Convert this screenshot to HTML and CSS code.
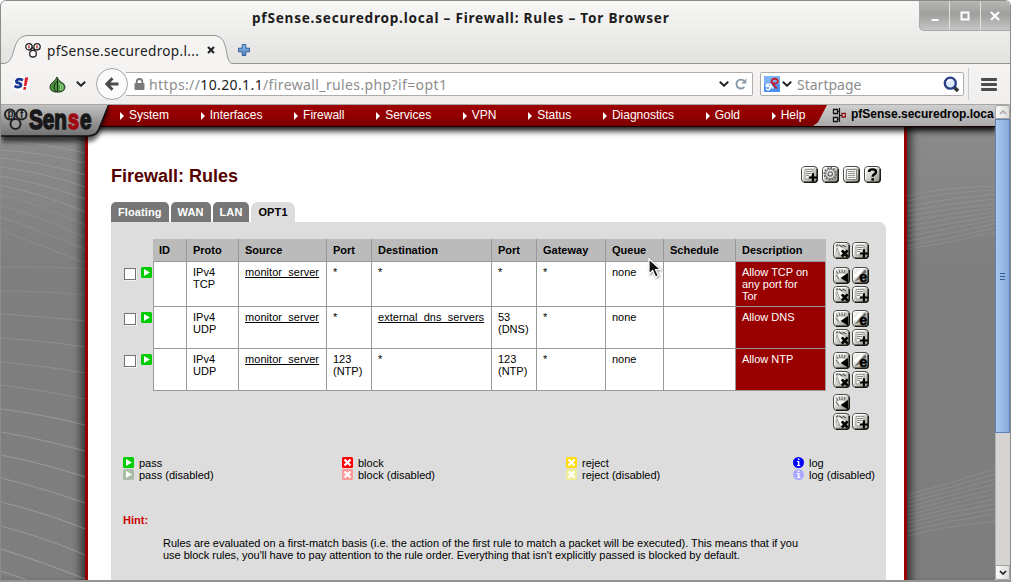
FILE: index.html
```html
<!DOCTYPE html>
<html lang="en">
<head>
<meta charset="utf-8">
<title>pfSense.securedrop.local - Firewall: Rules</title>
<link rel="stylesheet" href="styles.css">
</head>
<body>
<svg class="defs" width="0" height="0">
  <defs>
    <linearGradient id="btn" x1="0" y1="0" x2="1" y2="1"><stop offset="0" stop-color="#ffffff"/><stop offset=".5" stop-color="#d2d2cc"/><stop offset="1" stop-color="#85857a"/></linearGradient>
    <linearGradient id="plus-blue" x1="0" y1="0" x2="0" y2="1"><stop offset="0" stop-color="#8db9e8"/><stop offset="1" stop-color="#4b82c3"/></linearGradient>
    <symbol id="base" viewBox="0 0 17 17"><rect x=".5" y=".5" width="16" height="16" rx="3.5" fill="url(#btn)" stroke="#4c4c46"/><path d="M1.5 13V4Q1.5 1.5 4 1.5H13" fill="none" stroke="#fff"/><path d="M3 16.2H13.5Q16.2 16.2 16.2 13.5V3" fill="none" stroke="#1c1c16" stroke-width="1.5"/></symbol>
    <symbol id="add" viewBox="0 0 17 17"><use href="#base"/><path d="M4 3.5H12V8L8 13H4Z" fill="#f3f3ee" stroke="#999"/><path d="M5 5.5H11M5 7.5H10M5 9.5H8" stroke="#888"/><path d="M11.9 7.3V15.7M7.8 11.5H16" stroke="#000" stroke-width="2.1"/></symbol>
    <symbol id="del" viewBox="0 0 17 17"><use href="#base"/><path d="M4 5.5L6.5 3L12.5 7.5L8 14L3.5 10Z" fill="#f4f4ee" stroke="#aaa"/><path d="M3 4L5 2.5M6 2.8L9.5 5.2M9.5 3L13 5" stroke="#555" stroke-width="1.3"/><path d="M4 6L7 13" stroke="#999"/><path d="M8.8 8.3L14.7 14.7M14.7 8.3L8.8 14.7" stroke="#000" stroke-width="2.6"/></symbol>
    <symbol id="move" viewBox="0 0 17 17"><use href="#base"/><path d="M3 6L6 12L9 13L13.5 6L10 6Z" fill="#f5f5f0" stroke="#aaa" stroke-width=".8"/><path d="M3.3 3.5L5 7M6 2.5L7 6M9 2.5V6M12 3L11 6.5M3 8L6 12" stroke="#666"/><path d="M15 6V15.5L7.5 11Z"/></symbol>
    <symbol id="edit" viewBox="0 0 17 17"><use href="#base"/><path d="M2.5 14.5L13 2.5L14.5 5L6 13Z" fill="#666"/><path d="M2.5 10L10 2.5" stroke="#fff" stroke-width="3"/><text x="7.3" y="14.8" font-family="Liberation Sans, sans-serif" font-size="14.5" font-weight="bold" stroke="#000" stroke-width=".5">e</text></symbol>
    <symbol id="gear" viewBox="0 0 17 17"><use href="#base"/><circle cx="8.3" cy="7.9" r="5.9" fill="none" stroke="#666" stroke-width="1.8" stroke-dasharray="1.8 1.2"/><circle cx="8.3" cy="7.9" r="4.7" fill="#e3e3df" stroke="#777"/><circle cx="8.3" cy="7.9" r="2.1" fill="#f4f4f4" stroke="#666" stroke-width="1.3"/></symbol>
    <symbol id="list" viewBox="0 0 17 17"><use href="#base"/><path d="M3.5 3.5H13.5V13.5H3.5Z" fill="#f4f4f0" stroke="#888"/><path d="M5 5.5H12M5 7.5H12M5 9.5H12M5 11.5H12" stroke="#999"/></symbol>
    <symbol id="help" viewBox="0 0 17 17"><use href="#base"/><path d="M5 6Q5 3.4 8.5 3.4Q12 3.4 12 5.9Q12 7.5 10.2 8.4Q8.7 9.2 8.7 10.8" fill="none" stroke="#000" stroke-width="2.4"/><path d="M7.4 12.2H10V14.5H7.4Z"/></symbol>
    <symbol id="play" viewBox="0 0 11 11"><rect width="11" height="11" rx="1.5"/><path d="M3 2V9L9 5.5Z" fill="#fff"/></symbol>
    <symbol id="cross" viewBox="0 0 11 11"><rect width="11" height="11" rx="1.5"/><path d="M2.5 2.5L8.5 8.5M8.5 2.5L2.5 8.5" stroke="#fff" stroke-width="2.3"/></symbol>
    <symbol id="info" viewBox="0 0 11 11"><circle cx="5.5" cy="5.5" r="5.5"/><path d="M4.9 1.5H6.4V3H4.9ZM4 4H6.4V8H7.2V9H4V8H4.9V5H4Z" fill="#fff"/></symbol>
    <symbol id="chev" viewBox="0 0 10 6"><path d="M.8.8L5 4.8L9.2.8" fill="none" stroke="#222" stroke-width="1.9"/></symbol>
  </defs>
</svg>
<div class="window">
  <header class="chrome-top">
    <div class="titlebar">
      <div class="title">pfSense.securedrop.local – Firewall: Rules – Tor Browser</div>
      <div class="controls">
        <span><svg width="10" height="10"><path d="M1.5 9H8.5" stroke="#fff" stroke-width="2"/></svg></span>
        <span><svg width="10" height="10"><path d="M1.5 1.5H8.5V8.5H1.5Z" fill="none" stroke="#fff" stroke-width="2"/></svg></span>
        <span><svg width="10" height="10"><path d="M1 1L9 9M9 1L1 9" stroke="#fff" stroke-width="2.3"/></svg></span>
      </div>
    </div>
    <div class="tabstrip">
      <svg class="tab-shape" width="232" height="29"><path d="M0 28.5H2C17 28.5 8 1 27 .5H213C230 1 222 28.5 232 28.5V29H0Z" fill="#f5f4f3"/><path d="M0 28.5H2C17 28.5 8 1 27 .5H213C230 1 222 28.5 232 28.5" fill="none" stroke="#959593"/></svg>
      <div class="tab">
        <svg width="16" height="16"><g fill="#fff" stroke="#222" stroke-width="1.3"><circle cx="4" cy="4.8" r="3.2"/><circle cx="12" cy="4.8" r="3.2"/><circle cx="8" cy="11.7" r="3.3"/></g><path d="M4 3.3V6.5M12 3.3V6.5" stroke="#b22" stroke-width="1.4"/><path d="M5 8L7 5L9 8" fill="none" stroke="#222"/></svg>
        <span class="tab-label">pfSense.securedrop.l...</span>
        <svg class="tab-close" width="8" height="8"><path d="M1 1L7 7M7 1L1 7" stroke="#222" stroke-width="2.1"/></svg>
      </div>
      <svg class="new-tab" width="12" height="12"><path d="M4.2.5H7.8V4.2H11.5V7.8H7.8V11.5H4.2V7.8H.5V4.2H4.2Z" fill="url(#plus-blue)" stroke="#34619c"/></svg>
    </div>
  </header>
  <div class="toolbar">
    <svg class="noscript" width="16" height="16"><circle cx="8" cy="8" r="7.8" fill="#fff"/><path d="M10 4.2Q5 1.8 3.4 4.8Q3.3 7 6 7.2Q9 8 7.5 10.3Q5.5 12 1.5 10" fill="none" stroke="#173b95" stroke-width="2.8"/><path d="M12 1.5H15.2L13.4 10H11ZM10.8 11H13.3L12.7 13.8H10.2Z" fill="#e01822"/></svg>
    <svg class="onion" width="17" height="17"><path d="M8 1Q7 4 4 6Q1 8 1 11Q1 15 6 16H11Q16 15 16 11Q16 8 12 6Q9 4 8 1Z" fill="#4c9440" stroke="#243b22"/><path d="M8.5 5Q5 8 5 11Q5 14 7.5 16M8.5 3V16" fill="none" stroke="#182c18"/><path d="M10 7Q13 10 11 14M12.5 8.5Q15 11 12.5 14" fill="none" stroke="#8fca7f" stroke-width="1.3"/></svg>
    <svg class="onion-chev" width="10" height="6"><use href="#chev"/></svg>
    <div class="back"><svg width="14" height="14"><path d="M13.5 7H3M7.5 1.2L1.8 7L7.5 12.8" fill="none" stroke="#4a4a4a" stroke-width="3"/></svg></div>
    <div class="urlbar">
      <svg width="11" height="12"><path d="M2.7 6V3.6Q2.7 1 5.5 1T8.3 3.6V6" fill="none" stroke="#7a7a7a" stroke-width="1.8"/><rect x=".5" y="5" width="10" height="7" rx="1" fill="#7a7a7a"/></svg>
      <span class="url">https://<b>10.20.1.1</b>/firewall_rules.php?if=opt1</span>
      <svg class="url-chev" width="10" height="6"><use href="#chev"/></svg>
      <svg width="12" height="12"><path d="M9.3 8.8A4.4 4.4 0 1 1 8.8 2.8" fill="none" stroke="#8b9aa8" stroke-width="1.9"/><path d="M11.3.4V5.5H6.2Z" fill="#8b9aa8"/></svg>
    </div>
    <div class="search">
      <svg width="16" height="16"><rect width="16" height="16" fill="#4c91ee"/><rect width="16" height="8" fill="#7db2f4"/><path d="M5.5 8.5Q1.5 8 2.3 10.5Q6 9.8 6.3 12Q5 14.8 2 13M6 8L9 12.5" fill="none" stroke="#fff" stroke-width="1.6"/><path d="M8.3 3.2Q13.5 1.5 14 5.5Q13 8.5 9.2 6.8M8.3 3.2L7.4 6L12.8 12.5" fill="none" stroke="#c41d2c" stroke-width="1.9"/></svg>
      <svg width="10" height="6"><use href="#chev"/></svg>
      <span class="placeholder">Startpage</span>
      <svg width="17" height="17"><path d="M11 11L15 15" stroke="#333" stroke-width="3.5"/><circle cx="7.3" cy="7.2" r="5.5" fill="#dce8fb" stroke="#273d86" stroke-width="2.3"/><path d="M4.5 6Q5.5 4 8 4" fill="none" stroke="#fff" stroke-width="1.5"/></svg>
    </div>
    <div class="menu"><i></i><i></i><i></i></div>
  </div>
  <div class="viewport">
    <div class="page">
      <nav class="nav">
        <div class="menu-items"><a>System</a><a>Interfaces</a><a>Firewall</a><a>Services</a><a>VPN</a><a>Status</a><a>Diagnostics</a><a>Gold</a><a>Help</a></div>
        <div class="host">
          <svg width="14" height="15"><path d="M1.5 1.5H5.5V5.5H1.5ZM1.5 9.5H5.5V13.5H1.5Z" fill="#ccc" stroke="#111" stroke-width="1.3"/><path d="M7.5 0V14M5.5 3.5H7.5M5.5 11H7.5M7.5 7.5H10" stroke="#111" stroke-width="1.2"/><path d="M10 5.5H13.3V9H10Z" fill="#ddd" stroke="#8b1010" stroke-width="1.3"/></svg>
          <b>pfSense.securedrop.loca</b>
        </div>
      </nav>
      <div class="body">
        <aside class="gutter left"><svg width="84" height="453"><g fill="none" stroke="#fff" stroke-width="1.2"><path stroke-opacity=".13" d="M0 4Q45 6 84 16M0 14Q45 16 84 26M0 23Q45 26 84 36M0 31Q45 36 84 48M0 40Q45 46 84 60M0 49Q45 57 84 72M0 58Q45 68 84 85"/><path stroke-opacity=".08" d="M0 67Q45 80 84 98M0 78Q45 92 84 110M0 90Q45 106 84 122M0 103Q45 120 84 136M0 140Q45 139 84 142M0 164Q45 164 84 168"/><path stroke-opacity=".13" d="M0 187Q45 190 84 194M0 211Q45 214 84 220M0 235Q45 239 84 246M0 258Q45 264 84 272"/><path stroke-opacity=".2" d="M0 282Q45 288 84 298M0 305Q45 313 84 324M0 328Q45 337 84 350M0 351Q45 362 84 376M0 375Q45 386 84 402M0 399Q45 411 84 428M0 422Q45 436 84 452M0 444L26 453"/></g></svg></aside>
        <main class="sheet">
          <div class="heading"><h1>Firewall: Rules</h1><div class="actions"><svg><use href="#add"/></svg><svg><use href="#gear"/></svg><svg><use href="#list"/></svg><svg><use href="#help"/></svg></div></div>
          <div class="tabs"><span>Floating</span><span>WAN</span><span>LAN</span><span class="active">OPT1</span></div>
          <section class="panel">
            <div class="row head">
              <div class="lead"></div>
              <div class="cells"><b>ID</b><b>Proto</b><b>Source</b><b>Port</b><b>Destination</b><b>Port</b><b>Gateway</b><b>Queue</b><b>Schedule</b><b>Description</b></div>
              <div class="btns"><svg><use href="#del"/></svg><svg><use href="#add"/></svg></div>
            </div>
            <div class="row first">
              <div class="lead"><i class="check"></i><svg class="dot green"><use href="#play"/></svg></div>
              <div class="cells"><div></div><div>IPv4 TCP</div><div><u>monitor_server</u></div><div>*</div><div>*</div><div>*</div><div>*</div><div>none</div><div></div><div class="desc">Allow TCP on any port for Tor</div></div>
              <div class="btns"><svg><use href="#move"/></svg><svg><use href="#edit"/></svg><svg><use href="#del"/></svg><svg><use href="#add"/></svg></div>
            </div>
            <div class="row">
              <div class="lead"><i class="check"></i><svg class="dot green"><use href="#play"/></svg></div>
              <div class="cells"><div></div><div>IPv4 UDP</div><div><u>monitor_server</u></div><div>*</div><div><u>external_dns_servers</u></div><div>53 (DNS)</div><div>*</div><div>none</div><div></div><div class="desc">Allow DNS</div></div>
              <div class="btns"><svg><use href="#move"/></svg><svg><use href="#edit"/></svg><svg><use href="#del"/></svg><svg><use href="#add"/></svg></div>
            </div>
            <div class="row">
              <div class="lead"><i class="check"></i><svg class="dot green"><use href="#play"/></svg></div>
              <div class="cells"><div></div><div>IPv4 UDP</div><div><u>monitor_server</u></div><div>123 (NTP)</div><div>*</div><div>123 (NTP)</div><div>*</div><div>none</div><div></div><div class="desc">Allow NTP</div></div>
              <div class="btns"><svg><use href="#move"/></svg><svg><use href="#edit"/></svg><svg><use href="#del"/></svg><svg><use href="#add"/></svg></div>
            </div>
            <div class="row foot">
              <div class="lead"></div><div></div>
              <div class="btns"><svg><use href="#move"/></svg><span></span><svg><use href="#del"/></svg><svg><use href="#add"/></svg></div>
            </div>
            <div class="legend">
              <div><p><svg class="dot green"><use href="#play"/></svg>pass</p><p><svg class="dot green-off"><use href="#play"/></svg>pass (disabled)</p></div>
              <div><p><svg class="dot red"><use href="#cross"/></svg>block</p><p><svg class="dot red-off"><use href="#cross"/></svg>block (disabled)</p></div>
              <div><p><svg class="dot yellow"><use href="#cross"/></svg>reject</p><p><svg class="dot yellow-off"><use href="#cross"/></svg>reject (disabled)</p></div>
              <div><p><svg class="dot blue"><use href="#info"/></svg>log</p><p><svg class="dot blue-off"><use href="#info"/></svg>log (disabled)</p></div>
            </div>
            <div class="hint">Hint:</div>
            <div class="hint-text">Rules are evaluated on a first-match basis (i.e. the action of the first rule to match a packet will be executed). This means that if you<br>use block rules, you'll have to pay attention to the rule order. Everything that isn't explicitly passed is blocked by default.</div>
          </section>
        </main>
        <aside class="gutter right"><svg width="88" height="453"><g fill="none" stroke="#fff" stroke-opacity=".1"><path d="M0 69Q40 60 88 59M0 74Q40 65 88 63M0 79Q45 71 88 67M0 84Q45 76 88 72M0 89Q45 81 88 77M0 94Q45 86 88 81M0 99Q45 91 88 85M0 104Q45 96 88 89M0 109Q45 101 88 93M0 114Q45 106 88 97M0 119Q45 111 88 101M0 122Q45 116 88 105"/><path d="M0 368Q45 356 88 342M0 372Q45 360 88 347M0 376Q45 364 88 352M0 380Q45 368 88 357M0 384Q45 372 88 362M0 388Q45 376 88 367M0 392Q45 380 88 372M0 396Q45 384 88 377M0 400Q45 388 88 382M0 404Q45 393 88 387M0 409Q45 398 88 394"/></g></svg></aside>
      </div>
      <svg class="logo" width="120" height="42">
        <defs><linearGradient id="lg" x1="0" y1="0" x2="0" y2="1"><stop offset="0" stop-color="#c4c4c4"/><stop offset="1" stop-color="#707070"/></linearGradient><filter id="blur" x="-10%" y="-20%" width="120%" height="150%"><feGaussianBlur stdDeviation="2"/></filter></defs>
        <path d="M0 0H108L97 26Q93 33 86 33H0Z" transform="translate(1 4)" fill="#000" opacity=".6" filter="url(#blur)"/>
        <path d="M-1 -1H108L97 26Q94 31 87 31H-1Z" fill="url(#lg)" stroke="#111" stroke-width="1.5"/>
        <g fill="#aaa" fill-opacity=".4" stroke="#222" stroke-width="2"><circle cx="9" cy="9.5" r="5"/><circle cx="20.5" cy="9.5" r="5"/><circle cx="14.5" cy="19" r="5"/></g>
        <text x="6.5" y="12" class="rings">p</text><text x="19" y="13" class="rings">f</text>
        <text x="28" y="24" textLength="38" lengthAdjust="spacingAndGlyphs" class="logo-text">Sen</text>
        <text x="67" y="24" textLength="11" lengthAdjust="spacingAndGlyphs" class="logo-text logo-red">s</text>
        <text x="79" y="24" textLength="11.5" lengthAdjust="spacingAndGlyphs" class="logo-text">e</text>
      </svg>
    </div>
    <div class="scroll"><div class="up"><svg width="8" height="5"><path d="M1 4L4 1L7 4" fill="none" stroke="#aaa" stroke-width="1.5"/></svg></div><div class="thumb"><i></i><i></i><i></i></div><div class="track"></div><div class="down"><svg width="8" height="5"><path d="M1 1L4 4L7 1" fill="none" stroke="#222" stroke-width="1.7"/></svg></div></div>
  </div>
  <svg class="cursor" width="16" height="21"><path d="M1 1V16L4.7 12.5L7.5 19L10.3 17.7L7.5 11.5H12.5Z" fill="#111" stroke="#fff" stroke-width="1.2"/></svg>
</div>
</body>
</html>
```
FILE: styles.css
```css
* { box-sizing: border-box; }
body { margin: 0; background: #fff; font: 11px/12px "Liberation Sans", Arial, sans-serif; color: #000; overflow: hidden; }
svg { display: block; flex: none; }
p, h1 { margin: 0; }
.defs { position: absolute; }
.window { position: relative; width: 1011px; height: 582px; display: flex; flex-direction: column; border: 1px solid #8c8c8a; border-bottom: 2px solid #969492; border-radius: 6px 6px 0 0; overflow: hidden; background: #f1f0ef; }
.chrome-top { height: 63px; background: linear-gradient(#f7f7f6, #e3e2e1); flex: none; }
.titlebar { height: 34px; display: flex; justify-content: flex-end; }
.title { flex: 1; padding: 6px 0 0 251px; font: bold 13.6px/22px "Noto Sans", "Open Sans", sans-serif; color: #1c1c1c; white-space: nowrap; letter-spacing: .77px; }
.controls { display: flex; width: 91px; height: 30px; border: 1px solid #aaa; border-width: 0 0 1px 1px; border-radius: 0 0 0 5px; background: linear-gradient(#b7b7b5, #9f9f9d 45%, #c6c6c4); overflow: hidden; }
.controls span { flex: 1; display: grid; place-items: center; border-left: 1px solid #e1e1df; }
.controls span:first-child { border-left: 0; }
.tabstrip { position: relative; height: 29px; display: flex; align-items: center; border-bottom: 1px solid #959593; }
.tab-shape { position: absolute; left: 0; top: 0; }
.tab { position: relative; display: flex; align-items: center; width: 214px; padding: 2px 0 0 24px; height: 28px; }
.tab-label { flex: 1; margin-left: 6px; padding-top: 2px; font: 13.6px/20px "Noto Sans", "Open Sans", sans-serif; letter-spacing: .32px; color: #1b1b1b; white-space: nowrap; }
.new-tab { margin: 2px 0 0 23px; }
.toolbar { flex: none; height: 41px; display: flex; align-items: center; border-bottom: 1px solid #a8a7a6; background: linear-gradient(#f5f4f3, #efeeed); }
.noscript { margin-left: 12px; }
.onion { margin-left: 20px; }
.onion-chev { margin-left: 10px; }
.back { position: relative; z-index: 1; margin-left: 10px; width: 32px; height: 32px; border-radius: 50%; border: 1px solid #9fa6ae; background: #fbfbfb; display: grid; place-items: center; }
.urlbar { width: 627px; margin-left: -2px; height: 24px; padding: 0 5px 0 8px; border: 1px solid #aeadab; border-left: 0; border-radius: 0 2px 2px 0; background: #fff; display: flex; align-items: center; }
.url { margin-left: 4px; padding-top: 2px; flex: 1; font: 14px/20px "Noto Sans", "Open Sans", sans-serif; letter-spacing: .38px; color: #8d8d8d; white-space: nowrap; }
.url b { font-weight: normal; color: #1c1c1c; }
.url-chev { margin-right: 6px; }
.search { width: 204px; height: 24px; margin-left: 7px; padding: 0 3px 0 3px; display: flex; align-items: center; gap: 2px; border: 1px solid #aeadab; border-radius: 2px; background: #fff; }
.placeholder { flex: 1; padding: 2px 0 0 3px; font: 14px/20px "Noto Sans", "Open Sans", sans-serif; color: #8d8d8d; }
.menu { height: 32px; margin-left: 4px; padding-left: 12px; border-left: 1px solid #c6ccd2; display: flex; flex-direction: column; justify-content: center; gap: 2px; }
.menu i { width: 16px; height: 3px; border-radius: 1px; background: #4c4c4c; }

.viewport { flex: 1; min-height: 0; display: flex; }
.page { position: relative; width: 994px; overflow: hidden; background: #808080; }
.nav { position: relative; z-index: 1; height: 22px; display: flex; border-bottom: 1px solid #1c0000; background: linear-gradient(#9c0000, #940000 50%, #780000); box-shadow: 0 2px 6px 2px rgba(0,0,0,.9); }
.menu-items { display: flex; width: 818px; padding-left: 119px; gap: 31.7px; color: #fff; font-size: 12px; line-height: 21px; white-space: nowrap; }
.menu-items a { display: flex; align-items: center; }
.menu-items a::before { content: ""; border-left: 4px solid #fff; border-top: 4px solid transparent; border-bottom: 4px solid transparent; margin-right: 5px; }
.host { flex: 1; min-width: 0; padding-left: 19px; margin-left: -6px; display: flex; gap: 5px; align-items: center; background: linear-gradient(#cfcfcf, #a9a9a9); clip-path: polygon(14px 0, 100% 0, 100% 100%, 0 100%, 5px 82%); white-space: nowrap; font-size: 12px; line-height: 18px; }
.host b { align-self: flex-start; }
.body { display: flex; height: 453px; }
.gutter { width: 84px; background: linear-gradient(#8b8b8b, #7f7f7f 30%, #7e7e7e); flex: none; }
.left { box-shadow: inset -9px 0 8px -5px #333; }
.right { width: 88px; box-shadow: inset 9px 0 8px -5px #333; }
.sheet { width: 822px; border: 3px solid #900; border-width: 0 3px; padding: 37px 18px 0 23px; background: #fff; }
.heading { display: flex; justify-content: space-between; height: 38px; }
h1 { font-size: 18px; line-height: 24px; color: #500; }
.actions { display: flex; gap: 4px; padding: 2px 5px 0 0; }
.actions svg, .btns svg, .btns span { width: 17px; height: 17px; }
.tabs { display: flex; gap: 2px; height: 20px; }
.tabs span { padding: 0 7px; border-radius: 5px 5px 0 0; background: #777; color: #fff; font-weight: bold; line-height: 21px; letter-spacing: .1px; }
.tabs .active { background: #ddd; color: #000; border-radius: 7px 7px 0 0; }
.panel { height: 358px; background: #ddd; border-radius: 0 7px 0 0; padding: 17px 0 0 12px; }
.row { display: grid; grid-template-columns: 30px 673px 36px; height: 42px; }
.head { height: 23px; }
.row.first { height: 45px; }
.lead { display: flex; gap: 5px; padding: 5px 0 0 1px; }
.check { width: 12px; height: 12px; margin-top: 1px; border: 1px solid #77736c; background: #fff; box-shadow: 1px 1px 0 #f3f3f3; }
.dot { width: 11px; height: 11px; }
.cells { display: grid; grid-template-columns: 34px 52px 88px 45px 120px 45px 69px 58px 72px 90px; }
.cells > * { padding: 4px 6px 0; border-right: 1px solid #999; border-bottom: 1px solid #999; background: #fff; }
.cells > :first-child { border-left: 1px solid #999; }
.head .cells > * { background: #bbb; padding-top: 5px; }
.head .cells > :first-child { border-left-color: #bbb; padding-left: 5px; }
.head .cells > :last-child { border-right-color: #bbb; }
.cells .desc { background: #900; color: #fff; padding-right: 12px; }
u { text-underline-offset: 1px; letter-spacing: .05px; }
.btns { display: grid; grid-template-columns: 17px 17px; gap: 2px; align-content: start; padding: 3px 0 0 7px; }
.first .btns { padding-top: 5px; }
.legend { display: grid; grid-template-columns: 219px 224px 227px auto; margin-top: 24px; }
.legend p { display: flex; gap: 5px; white-space: nowrap; }
.green { fill: #0c0; } .green-off { fill: #a9bda9; } .red { fill: #f00; } .red-off { fill: #f99; }
.yellow { fill: #fd1; } .yellow-off { fill: #ee9; } .blue { fill: #00f; } .blue-off { fill: #aaf; }
.hint { margin-top: 33px; color: #c00; font-weight: bold; }
.hint-text { margin: 11px 0 0 40px; white-space: nowrap; letter-spacing: -.027px; }
.logo { position: absolute; left: 0; top: 0; z-index: 2; }
.logo-text { font: bold 28px "Liberation Sans", sans-serif; fill: #181818; stroke: #181818; stroke-width: 1.6px; }
.logo-red { fill: #a00810; stroke: #a00810; }
.rings { font: bold 10px "Liberation Sans", sans-serif; fill: #222; }
.scroll { width: 15px; display: flex; flex-direction: column; background: #d6d4d2; }
.up, .down { height: 14px; flex: none; display: grid; place-items: center; border: 1px solid #a5a3a0; border-radius: 3px 3px 0 0; background: linear-gradient(90deg, #fafafa, #dddcda); }
.down { border-radius: 0 0 3px 3px; height: 15px; }
.thumb { height: 314px; flex: none; border: 1px solid #5d84b5; background: linear-gradient(90deg, #a9c8f0, #85a9da); display: flex; flex-direction: column; align-items: center; justify-content: center; gap: 2px; }
.thumb i { width: 5px; height: 1px; background: #365e91; }
.track { flex: 1; border-left: 1px solid #b5b2af; }
.cursor { position: absolute; left: 647px; top: 257px; filter: drop-shadow(1px 1px 1px #999); }
```
